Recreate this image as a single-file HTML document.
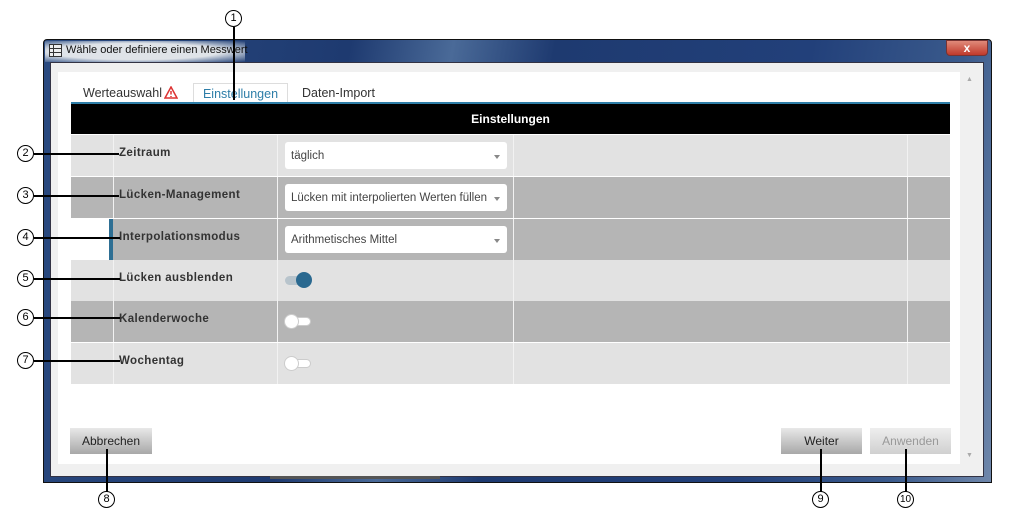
<!DOCTYPE html>
<html><head><meta charset="utf-8"><style>
*{margin:0;padding:0;box-sizing:border-box}
body{width:1024px;height:524px;background:#fff;position:relative;overflow:hidden;font-family:"Liberation Sans",Arial,sans-serif;font-size:12px;color:#333}
.a{position:absolute}
.win{left:43px;top:39px;width:949px;height:444px;background:linear-gradient(100deg,#2a4a80 0%,#1e3a70 30%,#4a6a98 40%,#1e3a70 50%,#22407a 75%,#3a5a8c 90%,#6f87ab 100%);border:1px solid #111;border-radius:4px 4px 0 0}
.frame{left:50px;top:62px;width:934px;height:415px;background:#f0f0f0;border:1px solid #334}
.content{left:58px;top:72px;width:902px;height:392px;background:#fff}
.row{position:absolute;left:71px;width:879px;height:41px}
.lt{background:#e2e2e2}.dk{background:#b5b5b5}
.vl{position:absolute;top:0;width:1px;height:100%;background:#f2f2f2}
.lbl{position:absolute;left:48px;top:12px;font-weight:bold;font-size:11.5px;letter-spacing:.4px;color:#333}
.sel{position:absolute;left:214px;top:7px;width:222px;height:27px;background:#fff;border-radius:3px;font-size:11.5px;color:#444;padding:8px 0 0 6px}
.sel:after{content:"";position:absolute;right:7px;top:13px;border:3px solid transparent;border-top:4px solid #888}
.c{position:absolute;width:17px;height:17px;border:1px solid #000;border-radius:50%;background:#fff;font-size:11px;text-align:center;line-height:15px;color:#000}
.h{position:absolute;height:1.5px;background:#000}
.v{position:absolute;width:1.5px;background:#000}
.btn{position:absolute;top:428px;height:26px;background:linear-gradient(#e8e8e8,#a8a8a8);font-size:12px;text-align:center;line-height:26px;color:#222}
</style></head><body>
<div class="a win"></div>
<div class="a" style="left:45px;top:41px;width:200px;height:21px;background:radial-gradient(ellipse at 45% 50%,#dfe3e8 55%,rgba(200,210,222,.6) 75%,rgba(40,70,120,0) 100%)"></div>
<svg class="a" style="left:49px;top:44px" width="13" height="13"><rect x=".5" y=".5" width="12" height="12" fill="#eee" stroke="#333"/><path d="M.5 4.5H12.5M.5 8.5H12.5M4.5.5V12.5" stroke="#333"/></svg>
<div class="a" style="left:66px;top:44px;font-size:11px;color:#111">Wähle oder definiere einen Messwert</div>
<div class="a" style="left:946px;top:40px;width:42px;height:16px;background:linear-gradient(#e08a7a,#c0392b);border:1px solid #733;border-radius:0 0 4px 4px;color:#fff;font-weight:bold;text-align:center;line-height:14px;font-size:12px">x</div>
<div class="a frame"></div>
<div class="a content"></div>
<div class="a" style="left:966px;top:76px;font-size:7px;color:#aaa">▲</div>
<div class="a" style="left:966px;top:452px;font-size:7px;color:#aaa">▼</div>
<div class="a" style="left:270px;top:476px;width:170px;height:3px;background:#555"></div>
<div class="a" style="left:83px;top:86px;font-size:12.5px;color:#333">Werteauswahl</div>
<svg class="a" style="left:164px;top:86px" width="14" height="13"><path d="M7 1L13 12H1Z" fill="none" stroke="#d33" stroke-width="1.5"/><path d="M7 5V8.5M7 10V11" stroke="#d33" stroke-width="1.5"/></svg>
<div class="a" style="left:193px;top:83px;width:95px;height:21px;border:1px solid #ddd;border-bottom:none;background:#fff;color:#2e7ea8;font-size:12.5px;text-align:center;padding-top:3px">Einstellungen</div>
<div class="a" style="left:302px;top:86px;font-size:12.5px;color:#333">Daten-Import</div>
<div class="a" style="left:71px;top:102px;width:879px;height:2px;background:#2e7ea8"></div>
<div class="a" style="left:71px;top:104px;width:879px;height:30px;background:#000;color:#fff;font-weight:bold;text-align:center;line-height:30px;font-size:12px">Einstellungen</div>
<div class="row lt" style="top:135px"><div class="vl" style="left:42px"></div><div class="vl" style="left:206px"></div><div class="vl" style="left:442px"></div><div class="vl" style="left:836px"></div><div class="lbl">Zeitraum</div><div class="sel">täglich</div></div>
<div class="row dk" style="top:177px"><div class="vl" style="left:42px"></div><div class="vl" style="left:206px"></div><div class="vl" style="left:442px"></div><div class="vl" style="left:836px"></div><div class="lbl" style="left:48px">Lücken-Management</div><div class="sel">Lücken mit interpolierten Werten füllen</div></div>
<div class="row dk" style="top:219px"><div style="position:absolute;left:0;top:0;width:38px;height:41px;background:#fff"></div><div style="position:absolute;left:38px;top:0;width:4px;height:41px;background:#2e6f94"></div><div class="vl" style="left:206px"></div><div class="vl" style="left:442px"></div><div class="vl" style="left:836px"></div><div class="lbl">Interpolationsmodus</div><div class="sel">Arithmetisches Mittel</div></div>
<div class="row lt" style="top:260px"><div class="vl" style="left:42px"></div><div class="vl" style="left:206px"></div><div class="vl" style="left:442px"></div><div class="vl" style="left:836px"></div><div class="lbl">Lücken ausblenden</div>
<div style="position:absolute;left:214px;top:16px;width:22px;height:9px;border-radius:5px;background:#b8c4cc"></div><div style="position:absolute;left:225px;top:12px;width:16px;height:16px;border-radius:50%;background:#2a6990"></div></div>
<div class="row dk" style="top:301px"><div class="vl" style="left:42px"></div><div class="vl" style="left:206px"></div><div class="vl" style="left:442px"></div><div class="vl" style="left:836px"></div><div class="lbl">Kalenderwoche</div>
<div style="position:absolute;left:214px;top:16px;width:26px;height:9px;border-radius:5px;background:#fff;border:1px solid #ccc"></div><div style="position:absolute;left:213px;top:13px;width:15px;height:15px;border-radius:50%;background:#fff;border:1px solid #ccc"></div></div>
<div class="row lt" style="top:343px"><div class="vl" style="left:42px"></div><div class="vl" style="left:206px"></div><div class="vl" style="left:442px"></div><div class="vl" style="left:836px"></div><div class="lbl">Wochentag</div>
<div style="position:absolute;left:214px;top:16px;width:26px;height:9px;border-radius:5px;background:#fff;border:1px solid #ccc"></div><div style="position:absolute;left:213px;top:13px;width:15px;height:15px;border-radius:50%;background:#fff;border:1px solid #ccc"></div></div>
<div class="btn" style="left:70px;width:82px">Abbrechen</div>
<div class="btn" style="left:781px;width:81px">Weiter</div>
<div class="btn" style="left:870px;width:81px;background:linear-gradient(#eee,#d0d0d0);color:#999">Anwenden</div>
<div class="c" style="left:225px;top:10px">1</div><div class="v" style="left:233px;top:27px;height:73px"></div>
<div class="c" style="left:17px;top:145px">2</div><div class="h" style="left:34px;top:153px;width:85px"></div>
<div class="c" style="left:17px;top:187px">3</div><div class="h" style="left:34px;top:195px;width:85px"></div>
<div class="c" style="left:17px;top:229px">4</div><div class="h" style="left:34px;top:237px;width:86px"></div>
<div class="c" style="left:17px;top:270px">5</div><div class="h" style="left:34px;top:278px;width:86px"></div>
<div class="c" style="left:17px;top:309px">6</div><div class="h" style="left:34px;top:317px;width:86px"></div>
<div class="c" style="left:17px;top:352px">7</div><div class="h" style="left:34px;top:360px;width:86px"></div>
<div class="v" style="left:106px;top:449px;height:43px"></div><div class="c" style="left:98px;top:491px">8</div>
<div class="v" style="left:820px;top:449px;height:43px"></div><div class="c" style="left:812px;top:491px">9</div>
<div class="v" style="left:905px;top:449px;height:43px"></div><div class="c" style="left:897px;top:491px;font-size:10px">10</div>
</body></html>
